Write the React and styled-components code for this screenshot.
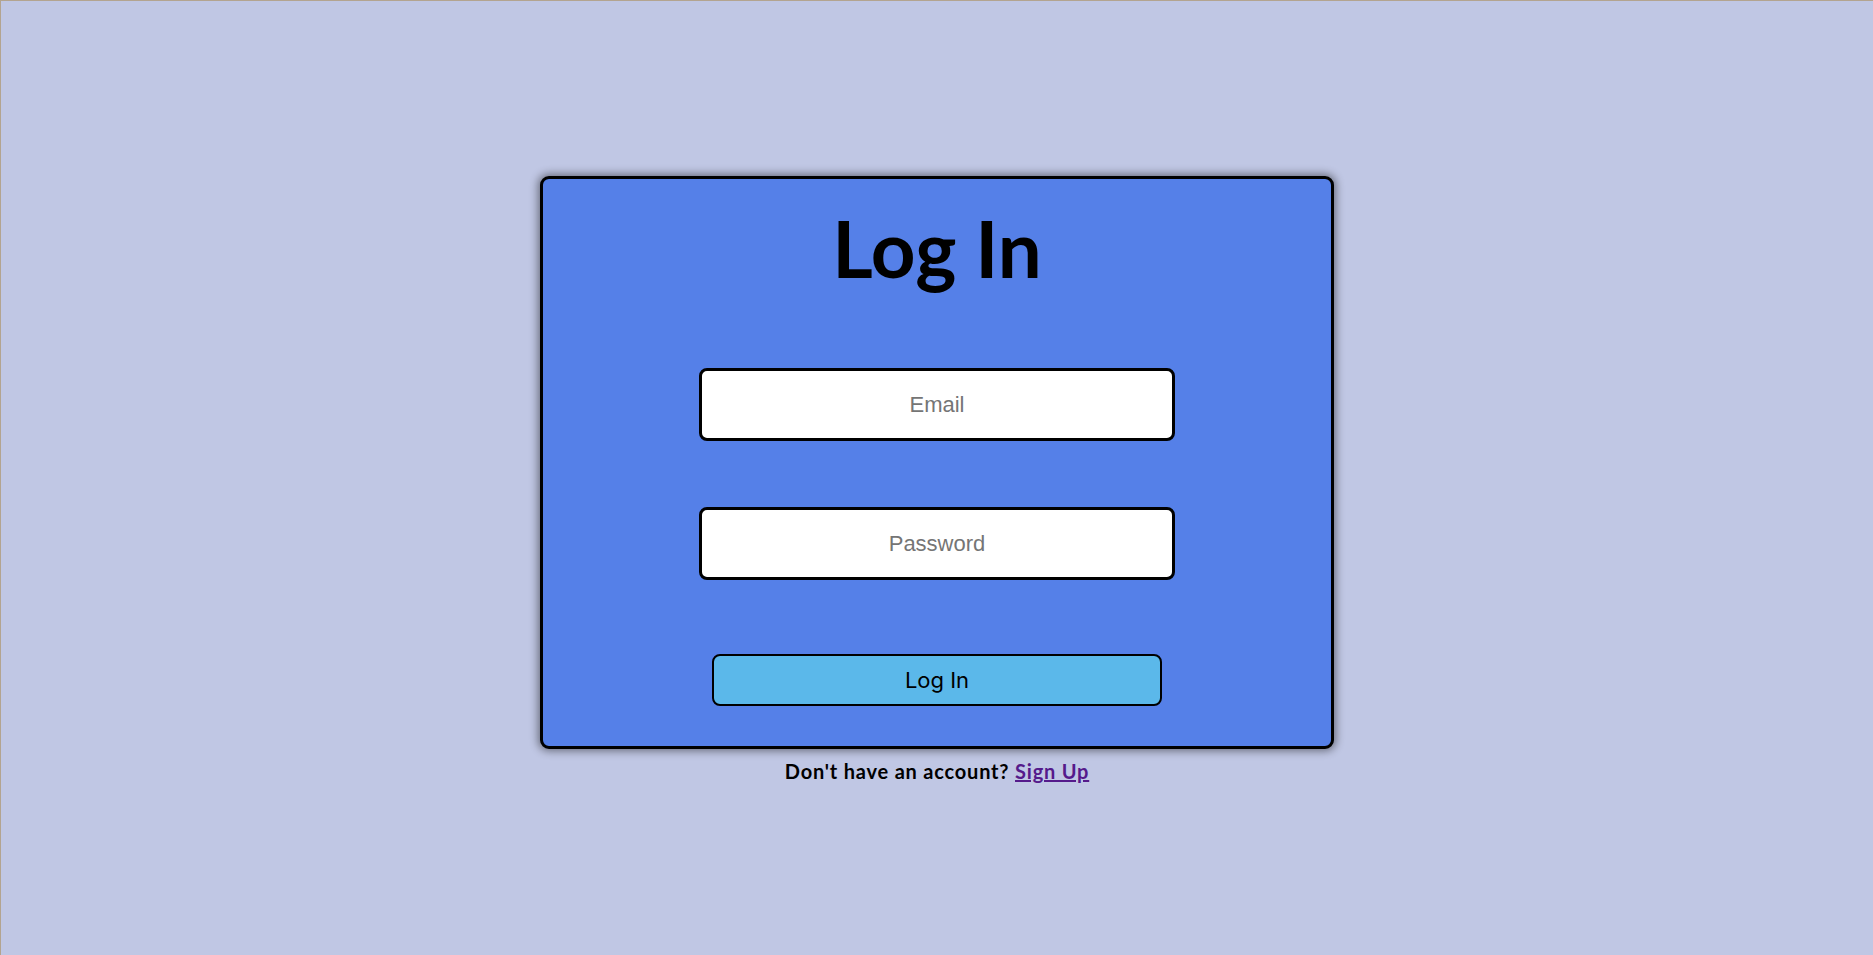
import styled, {createGlobalStyle} from 'styled-components';

const GlobalStyle = createGlobalStyle`
  html, body {
    margin: 0;
    padding: 0;
  }
  body {
    background-color: #c0c7e4;
    font-family: Lato, "DejaVu Sans", sans-serif;
  }
`;

export default function App() {
  return (
    <>
      <GlobalStyle />
      <Page>
        <Card>
          <Title>Log In</Title>
          <Form onSubmit={(e) => e.preventDefault()}>
            <Field type="email" placeholder="Email" />
            <Field type="password" placeholder="Password" />
            <SubmitButton type="submit">Log In</SubmitButton>
          </Form>
        </Card>
        <Footer>
          Don't have an account? <SignUpLink href="#">Sign Up</SignUpLink>
        </Footer>
      </Page>
    </>
  );
}

const Page = styled.div`
  box-sizing: border-box;
  min-height: 100vh;
  border-top: 1px solid #b3a48f;
  border-left: 1px solid #b3a48f;
  display: flex;
  flex-direction: column;
  align-items: center;
  padding-top: 175px;
`;

const Card = styled.div`
  box-sizing: border-box;
  width: 794px;
  height: 573px;
  background-color: #5580e8;
  border: 3px solid #000;
  border-radius: 9px;
  box-shadow: 0 0 8px 2px rgba(0, 0, 0, 0.45);
  display: flex;
  flex-direction: column;
  align-items: center;
`;

const Title = styled.h1`
  margin: 24px 0 0;
  font-family: Lato, sans-serif;
  font-weight: 700;
  font-size: 78px;
  line-height: 90px;
  color: #000;
`;

const Form = styled.form`
  display: flex;
  flex-direction: column;
  align-items: center;
  gap: 66px;
  margin-top: 75px;
`;

const Field = styled.input`
  box-sizing: border-box;
  width: 476px;
  height: 73px;
  border: 3px solid #000;
  border-radius: 8px;
  background: #fff;
  text-align: center;
  font-family: "Liberation Sans", Arial, sans-serif;
  font-size: 22px;
  outline: none;

  &::placeholder {
    color: #757575;
  }
`;

const SubmitButton = styled.button`
  box-sizing: border-box;
  width: 450px;
  height: 52px;
  margin-top: 8px;
  border: 2px solid #000;
  border-radius: 8px;
  background-color: #5bb8ea;
  color: #000;
  font-family: Inter, Roboto, sans-serif;
  font-size: 22px;
  cursor: pointer;
`;

const Footer = styled.p`
  margin: 10px 0 0;
  font-family: Lato, sans-serif;
  font-weight: 700;
  font-size: 20px;
  letter-spacing: 0.8px;
  color: #000;
`;

const SignUpLink = styled.a`
  color: #551a8b;
  text-decoration: underline;
`;
